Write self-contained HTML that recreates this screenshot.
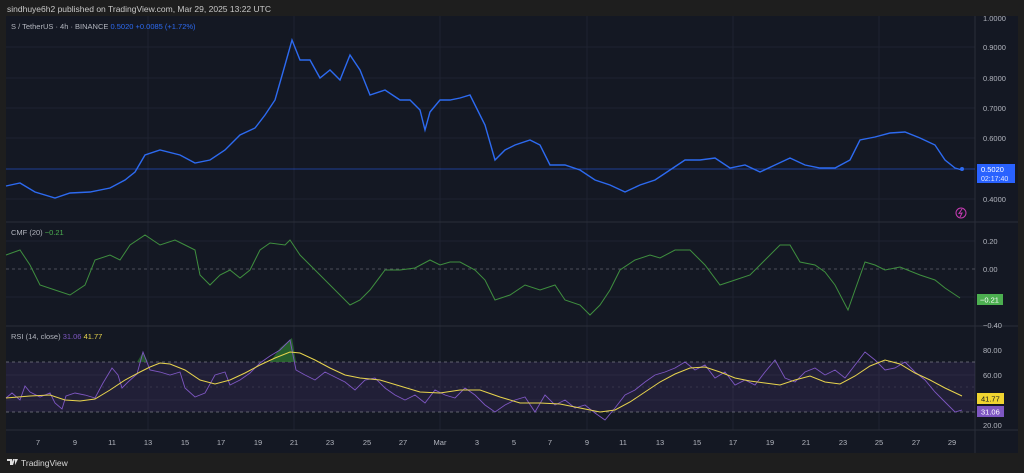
<!DOCTYPE html>
<html><head><meta charset="utf-8"><style>
html,body{margin:0;padding:0;background:#1e1e1e;width:1024px;height:473px;overflow:hidden}
svg{display:block;font-family:"Liberation Sans",sans-serif}
</style></head><body>
<svg width="1024" height="473" viewBox="0 0 1024 473">
<rect width="1024" height="473" fill="#1e1e1e"/>
<text x="7" y="12" fill="#c8c8c8" font-size="8.5">sindhuye6h2 published on TradingView.com, Mar 29, 2025 13:22 UTC</text>
<rect x="6" y="16" width="1012" height="437" fill="#141823"/>
<!-- grid -->
<g stroke="#1e2230" stroke-width="1">
<line x1="6" y1="47" x2="975" y2="47"/><line x1="6" y1="78" x2="975" y2="78"/><line x1="6" y1="108" x2="975" y2="108"/><line x1="6" y1="138" x2="975" y2="138"/><line x1="6" y1="199" x2="975" y2="199"/>
<line x1="6" y1="241" x2="975" y2="241"/><line x1="6" y1="297" x2="975" y2="297"/><line x1="6" y1="375" x2="975" y2="375"/><line x1="6" y1="400" x2="975" y2="400"/>
<line x1="148" y1="16" x2="148" y2="430"/><line x1="294" y1="16" x2="294" y2="430"/><line x1="440" y1="16" x2="440" y2="430"/><line x1="587" y1="16" x2="587" y2="430"/><line x1="733" y1="16" x2="733" y2="430"/><line x1="879" y1="16" x2="879" y2="430"/>
</g>
<g stroke="#2a2e39" stroke-width="1">
<line x1="6" y1="222" x2="1018" y2="222"/><line x1="6" y1="326" x2="1018" y2="326"/><line x1="975" y1="16" x2="975" y2="453"/><line x1="6" y1="430" x2="1018" y2="430"/>
</g>
<!-- price -->
<line x1="6" y1="169" x2="975" y2="169" stroke="#2962ff" stroke-width="0.8" opacity="0.7"/>
<polyline fill="none" stroke="#2d6af0" stroke-width="1.4" points="6,186 20,183 35,192 55,198 70,193 90,192 110,188 125,180 135,172 145,155 160,150 180,155 195,163 210,160 225,150 240,135 255,128 265,115 275,100 285,65 292,40 300,60 310,60 320,78 330,70 340,80 350,55 360,70 370,95 385,90 400,100 410,100 420,110 425,130 430,112 440,100 450,100 460,98 470,95 475,105 485,125 495,160 505,150 515,145 530,140 540,145 550,165 565,165 580,170 595,180 610,185 625,192 640,185 655,180 670,170 685,160 700,160 715,158 730,168 745,165 760,172 775,165 790,158 805,165 820,168 835,168 850,160 860,140 875,137 890,133 905,132 920,138 935,145 945,160 955,168 962,170"/>
<circle cx="962" cy="169" r="2" fill="#2d6af0"/>
<text x="11" y="29" font-size="7.5" fill="#b2b5be">S / TetherUS · 4h · BINANCE <tspan fill="#2d6af0">0.5020  +0.0085 (+1.72%)</tspan></text>
<g font-size="7.5" fill="#b2b5be">
<text x="983" y="21">1.0000</text><text x="983" y="50">0.9000</text><text x="983" y="81">0.8000</text><text x="983" y="111">0.7000</text><text x="983" y="141">0.6000</text><text x="983" y="202">0.4000</text>
</g>
<rect x="977" y="164" width="38" height="19" fill="#2962ff"/>
<text x="981" y="172" font-size="7.5" fill="#fff">0.5020</text>
<text x="981" y="181" font-size="7" fill="#dfe6ff">02:17:40</text>
<circle cx="961" cy="213" r="5" fill="none" stroke="#c83cb4" stroke-width="1"/>
<path d="M962,209 L959,213.5 L962,213 L960,217" fill="none" stroke="#c83cb4" stroke-width="1"/>
<!-- CMF -->
<line x1="6" y1="269" x2="975" y2="269" stroke="#5d606b" stroke-dasharray="3,3" stroke-width="0.8"/>
<polyline fill="none" stroke="#3f8f3f" stroke-width="1" points="6,255 20,250 30,265 40,285 55,290 70,295 85,285 95,260 110,255 120,260 130,245 145,235 160,245 175,240 185,245 195,250 200,275 210,285 220,275 230,270 240,278 250,270 260,250 270,243 285,245 290,240 300,255 310,265 320,275 335,290 350,305 360,300 370,290 385,270 400,270 415,268 430,260 440,265 450,262 460,262 475,270 485,280 495,300 510,295 525,285 540,290 555,285 565,300 580,305 590,315 600,305 610,290 620,270 635,260 650,255 660,258 675,250 690,250 705,265 720,285 735,280 750,275 765,260 780,245 790,245 800,262 815,265 825,272 835,285 848,310 855,290 865,262 875,265 885,270 900,267 920,275 935,280 945,288 960,298"/>
<text x="11" y="235" font-size="7.5" fill="#b2b5be">CMF (20) <tspan fill="#4caf50">−0.21</tspan></text>
<g font-size="7.5" fill="#b2b5be"><text x="983" y="244">0.20</text><text x="983" y="272">0.00</text><text x="983" y="328">−0.40</text></g>
<rect x="977" y="294" width="26" height="11" fill="#4caf50"/>
<text x="980" y="302.5" font-size="7.5" fill="#fff">−0.21</text>
<!-- RSI -->
<rect x="6" y="362" width="969" height="50" fill="#7e57c2" opacity="0.13"/>
<line x1="6" y1="362" x2="975" y2="362" stroke="#787b86" stroke-dasharray="3,3" stroke-width="0.8"/>
<line x1="6" y1="412" x2="975" y2="412" stroke="#787b86" stroke-dasharray="3,3" stroke-width="0.8"/>
<line x1="6" y1="387" x2="975" y2="387" stroke="#787b86" stroke-dasharray="2,4" stroke-width="0.5" opacity="0.5"/>
<path d="M270,362 L280,348 L292,338 L296,362 Z" fill="#2e7d32" opacity="0.7"/>
<path d="M137,362 L143,352 L148,362 Z" fill="#2e7d32" opacity="0.6"/>
<polyline fill="none" stroke="#7e57c2" stroke-width="0.9" points="6,398 12,393 20,400 25,386 30,392 40,397 50,393 55,403 62,409 66,396 75,393 85,395 95,398 103,383 112,368 118,375 122,388 128,382 137,374 143,352 150,370 160,372 170,375 180,372 185,388 195,397 205,393 215,375 225,372 230,385 240,380 250,373 260,363 270,356 280,350 290,340 296,370 305,375 315,380 325,372 335,377 345,382 355,390 365,380 375,378 385,388 395,395 405,400 415,395 425,403 435,390 445,395 455,398 465,388 475,395 485,405 495,412 505,405 515,400 525,397 535,412 545,395 555,405 565,400 575,408 585,405 595,413 605,420 615,408 625,395 635,390 645,382 655,375 665,372 675,368 685,362 695,370 705,365 715,378 725,372 735,385 745,380 755,385 765,372 775,360 785,378 795,382 805,372 815,368 825,375 835,370 845,378 855,365 865,352 875,360 885,370 895,368 905,362 915,372 925,380 935,392 945,402 955,412 962,410"/>
<polyline fill="none" stroke="#e8d44d" stroke-width="1" points="6,398 30,396 50,395 65,400 80,401 95,399 110,390 125,380 140,372 150,367 160,363 170,364 185,370 200,380 215,384 230,380 245,373 260,365 275,358 290,352 300,353 315,360 330,368 345,375 360,378 380,380 400,386 420,392 440,393 460,390 480,390 500,397 520,403 540,403 560,404 580,408 600,412 615,410 630,402 645,392 660,382 675,374 690,368 705,367 720,372 735,378 750,381 765,383 780,385 795,380 810,376 825,382 840,384 855,376 870,366 885,360 900,364 915,373 930,380 945,388 962,396"/>
<text x="11" y="339" font-size="7.5" fill="#b2b5be">RSI (14, close) <tspan fill="#7e57c2">31.06</tspan> <tspan fill="#e8d44d">41.77</tspan></text>
<g font-size="7.5" fill="#b2b5be"><text x="983" y="353">80.00</text><text x="983" y="378">60.00</text><text x="983" y="428">20.00</text></g>
<rect x="977" y="393" width="27" height="11" fill="#f0d430"/>
<text x="981" y="401.5" font-size="7.5" fill="#131722">41.77</text>
<rect x="977" y="406" width="27" height="11" fill="#7e57c2"/>
<text x="981" y="414.5" font-size="7.5" fill="#fff">31.06</text>
<!-- time axis -->
<g font-size="7.5" fill="#b2b5be" text-anchor="middle">
<text x="38" y="445">7</text><text x="75" y="445">9</text><text x="112" y="445">11</text><text x="148" y="445">13</text><text x="185" y="445">15</text><text x="221" y="445">17</text><text x="258" y="445">19</text><text x="294" y="445">21</text><text x="330" y="445">23</text><text x="367" y="445">25</text><text x="403" y="445">27</text><text x="440" y="445">Mar</text><text x="477" y="445">3</text><text x="514" y="445">5</text><text x="550" y="445">7</text><text x="587" y="445">9</text><text x="623" y="445">11</text><text x="660" y="445">13</text><text x="697" y="445">15</text><text x="733" y="445">17</text><text x="770" y="445">19</text><text x="806" y="445">21</text><text x="843" y="445">23</text><text x="879" y="445">25</text><text x="916" y="445">27</text><text x="952" y="445">29</text>
</g>
<!-- footer logo -->
<path d="M7,459 h5 v6 h-2 v-4 h-3 z M13,459 h2 l-2,6 h-2 z M15,459 h3 l-3,6 z" fill="#ddd"/>
<text x="21" y="466" font-size="8.5" fill="#d8d8d8">TradingView</text>
</svg>
</body></html>
